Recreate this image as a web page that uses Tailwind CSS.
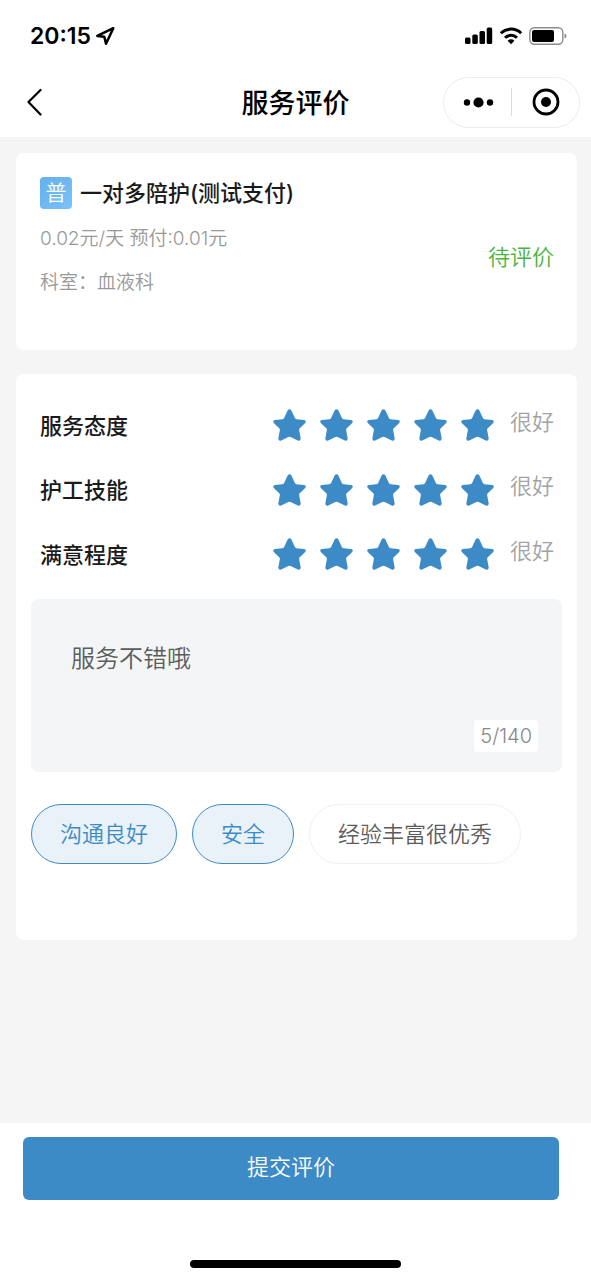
<!DOCTYPE html>
<html lang="zh-CN">
<head>
<meta charset="utf-8">
<meta name="viewport" content="width=device-width, initial-scale=1">
<title>服务评价</title>
<script src="https://cdn.jsdelivr.net/npm/@tailwindcss/browser@4"></script>
</head>
<body class="flex min-h-screen flex-col bg-[#f5f5f5] font-[Inter,'Noto_Sans_CJK_SC',sans-serif] text-[#1a1a1a]">
<svg class="hidden" aria-hidden="true">
  <symbol id="star" viewBox="0 0 33 33">
    <path fill="currentColor" d="M14.600 1.500Q16.500-.800 18.400 1.500L21.900 9Q22.400 10 23.500 10.200L31 11Q34 11.800 32 14.200L26.500 19.600Q26 20.400 26.200 21.500L27.700 29.500Q27.500 32.600 24.800 31.600L17.600 28Q16.500 27.500 15.400 28L8.200 31.600Q5.500 32.600 5.300 29.500L6.800 21.500Q7 20.400 6.500 19.600L1 14.200Q-1 11.800 2 11L9.500 10.200Q10.600 10 11.100 9Z"/>
  </symbol>
</svg>

<header class="bg-white">
  <div class="flex h-[71px] items-center justify-between pr-6 pl-[30px] text-black">
    <div class="flex items-center gap-1">
      <time class="text-[23px] leading-8 font-semibold">20:15</time>
      <svg class="size-5" viewBox="0 0 20 20" fill="none" stroke="currentColor" stroke-width="2.500" stroke-linejoin="round" aria-hidden="true"><path d="M18.300 2.200 2.300 9.900 9.300 10.700 11 17.800Z"/></svg>
    </div>
    <div class="flex items-center gap-[6px]">
      <svg class="h-[18px] w-7" viewBox="0 0 28 18" fill="currentColor" aria-hidden="true"><rect x="0" y="10.500" width="5.500" height="6.500" rx="1.500"/><rect x="7.300" y="7.500" width="5.500" height="9.500" rx="1.500"/><rect x="14.500" y="4" width="5.500" height="13" rx="1.500"/><rect x="21.700" y=".5" width="5.500" height="16.500" rx="1.500"/></svg>
      <svg class="h-[18px] w-6" viewBox="0 0 24 18" fill="none" stroke="currentColor" stroke-width="3" aria-hidden="true"><path d="M1.800 6.300a14.500 14.500 0 0 1 20.400 0M6 10.800a8.600 8.600 0 0 1 12 0"/><path d="M8.600 13.700a4.900 4.900 0 0 1 6.800 0L12 17.200Z" fill="currentColor" stroke="none"/></svg>
      <svg class="h-[18px] w-[38px]" viewBox="0 0 38 18" aria-hidden="true"><rect x=".8" y=".8" width="33" height="16.400" rx="4.500" fill="none" stroke="#8c8c8c" stroke-width="1.400"/><rect x="3" y="3" width="22" height="12" rx="2" fill="#000"/><path d="M35.500 6.500v5c1.400-.6 2-1.500 2-2.500s-.6-1.900-2-2.500Z" fill="#8c8c8c"/></svg>
    </div>
  </div>
  <div class="grid h-[66px] grid-cols-[1fr_auto_1fr] items-center px-[11px] pb-1">
    <button type="button" aria-label="返回" class="flex h-8 w-12 items-center justify-center justify-self-start text-black">
      <svg class="h-7 w-4" viewBox="0 0 16 28" fill="none" stroke="currentColor" stroke-width="2.200" stroke-linecap="round" stroke-linejoin="round" aria-hidden="true"><path d="M13.500 2 1.500 14 13.500 26.500"/></svg>
    </button>
    <h1 class="pt-1 text-[27px] leading-9 font-medium text-black">服务评价</h1>
    <div class="flex h-[51px] w-[137px] items-center justify-self-end rounded-full border border-[#ebebeb] text-black">
      <button type="button" aria-label="更多" class="flex h-full flex-1 items-center justify-center">
        <svg class="h-3 w-8" viewBox="0 0 32 12" fill="currentColor" aria-hidden="true"><circle cx="5" cy="6.500" r="3.200"/><circle cx="16.500" cy="6.500" r="5.100"/><circle cx="28" cy="6.500" r="3.200"/></svg>
      </button>
      <span class="h-7 w-px bg-[#dcdcdc]"></span>
      <button type="button" aria-label="关闭" class="flex h-full flex-1 items-center justify-center">
        <svg class="size-7" viewBox="0 0 28 28" aria-hidden="true"><circle cx="14" cy="14" r="12" fill="none" stroke="currentColor" stroke-width="2.800"/><circle cx="14" cy="14" r="5" fill="currentColor"/></svg>
      </button>
    </div>
  </div>
</header>

<main class="flex flex-1 flex-col gap-6 pt-4 pr-[14px] pb-6 pl-4">
  <section class="flex items-center justify-between rounded-lg bg-white pt-[23px] pr-[23px] pb-[45px] pl-6">
    <div>
      <h2 class="flex items-center gap-2 text-[22px] leading-[34px] font-medium">
        <span class="flex size-8 items-center justify-center rounded bg-linear-to-br from-[#62b0ee] to-[#7bc2f7] text-[21px] font-[350] text-white">普</span>
        <span>一对多陪护(测试支付)</span>
      </h2>
      <p class="mt-[6px] text-[19px] leading-[45px] font-[350] text-[#999]">0.02元/天 预付:0.01元</p>
      <p class="text-[19px] leading-[44px] font-[350] text-[#999]">科室：血液科</p>
    </div>
    <span class="pt-8 text-[22px] leading-8 font-[350] text-[#4cb43c]">待评价</span>
  </section>

  <form id="review" class="rounded-lg bg-white px-[15px] pt-[19px] pb-[76px]">
    <fieldset class="flex h-[65px] items-center justify-between pr-2 pl-[9px]">
      <legend class="contents"><span class="text-[22px] leading-8 font-medium">服务态度</span></legend>
      <div class="flex items-center gap-4">
        <div class="flex gap-[14px] text-[#3d8bc6]">
          <label class="relative"><input type="radio" name="attitude" value="1" aria-label="1星" class="sr-only"><svg class="size-[33px]"><use href="#star"/></svg></label>
          <label class="relative"><input type="radio" name="attitude" value="2" aria-label="2星" class="sr-only"><svg class="size-[33px]"><use href="#star"/></svg></label>
          <label class="relative"><input type="radio" name="attitude" value="3" aria-label="3星" class="sr-only"><svg class="size-[33px]"><use href="#star"/></svg></label>
          <label class="relative"><input type="radio" name="attitude" value="4" aria-label="4星" class="sr-only"><svg class="size-[33px]"><use href="#star"/></svg></label>
          <label class="relative"><input type="radio" name="attitude" value="5" aria-label="5星" checked class="sr-only"><svg class="size-[33px]"><use href="#star"/></svg></label>
        </div>
        <span class="pb-2 text-[22px] leading-8 font-[350] text-[#a3a3a3]">很好</span>
      </div>
    </fieldset>
    <fieldset class="flex h-16 items-center justify-between pr-2 pl-[9px]">
      <legend class="contents"><span class="text-[22px] leading-8 font-medium">护工技能</span></legend>
      <div class="flex items-center gap-4">
        <div class="flex gap-[14px] text-[#3d8bc6]">
          <label class="relative"><input type="radio" name="skill" value="1" aria-label="1星" class="sr-only"><svg class="size-[33px]"><use href="#star"/></svg></label>
          <label class="relative"><input type="radio" name="skill" value="2" aria-label="2星" class="sr-only"><svg class="size-[33px]"><use href="#star"/></svg></label>
          <label class="relative"><input type="radio" name="skill" value="3" aria-label="3星" class="sr-only"><svg class="size-[33px]"><use href="#star"/></svg></label>
          <label class="relative"><input type="radio" name="skill" value="4" aria-label="4星" class="sr-only"><svg class="size-[33px]"><use href="#star"/></svg></label>
          <label class="relative"><input type="radio" name="skill" value="5" aria-label="5星" checked class="sr-only"><svg class="size-[33px]"><use href="#star"/></svg></label>
        </div>
        <span class="pb-2 text-[22px] leading-8 font-[350] text-[#a3a3a3]">很好</span>
      </div>
    </fieldset>
    <fieldset class="flex h-[65px] items-center justify-between pr-2 pl-[9px]">
      <legend class="contents"><span class="text-[22px] leading-8 font-medium">满意程度</span></legend>
      <div class="flex items-center gap-4">
        <div class="flex gap-[14px] text-[#3d8bc6]">
          <label class="relative"><input type="radio" name="satisfaction" value="1" aria-label="1星" class="sr-only"><svg class="size-[33px]"><use href="#star"/></svg></label>
          <label class="relative"><input type="radio" name="satisfaction" value="2" aria-label="2星" class="sr-only"><svg class="size-[33px]"><use href="#star"/></svg></label>
          <label class="relative"><input type="radio" name="satisfaction" value="3" aria-label="3星" class="sr-only"><svg class="size-[33px]"><use href="#star"/></svg></label>
          <label class="relative"><input type="radio" name="satisfaction" value="4" aria-label="4星" class="sr-only"><svg class="size-[33px]"><use href="#star"/></svg></label>
          <label class="relative"><input type="radio" name="satisfaction" value="5" aria-label="5星" checked class="sr-only"><svg class="size-[33px]"><use href="#star"/></svg></label>
        </div>
        <span class="pb-2 text-[22px] leading-8 font-[350] text-[#a3a3a3]">很好</span>
      </div>
    </fieldset>

    <div class="mt-3 flex flex-col rounded-lg bg-[#f3f5f6] px-6 pt-[42px] pb-5">
      <textarea aria-label="评价内容" maxlength="140" class="block h-[79px] w-full resize-none bg-transparent px-4 text-[24px] leading-9 font-[350] text-[#5c5c5c] outline-none">服务不错哦</textarea>
      <span class="self-end rounded bg-white px-[6px] text-[20px] leading-8 font-light text-[#888]">5/140</span>
    </div>

    <div class="mt-8 flex flex-wrap gap-[15px] text-[22px] leading-8 font-[350]">
      <button type="button" aria-pressed="true" class="h-[60px] rounded-full border border-[#3d8bc6] bg-[#e8f2f8] px-7 text-[#3d8bc6]">沟通良好</button>
      <button type="button" aria-pressed="true" class="h-[60px] rounded-full border border-[#3d8bc6] bg-[#e8f2f8] px-7 text-[#3d8bc6]">安全</button>
      <button type="button" aria-pressed="false" class="h-[60px] rounded-full border border-[#f0f0f0] bg-white px-7 text-[#5c5c5c]">经验丰富很优秀</button>
    </div>
  </form>
</main>

<footer class="flex flex-col bg-white pt-[14px] pb-3">
  <div class="pr-8 pl-[23px]">
    <button type="submit" form="review" class="h-[63px] w-full rounded-md bg-[#3d8bc6] pb-1 text-[22px] leading-8 font-[350] text-white">提交评价</button>
  </div>
  <div class="mt-[60px] h-2 w-[211px] self-center rounded-full bg-black"></div>
</footer>
</body>
</html>
